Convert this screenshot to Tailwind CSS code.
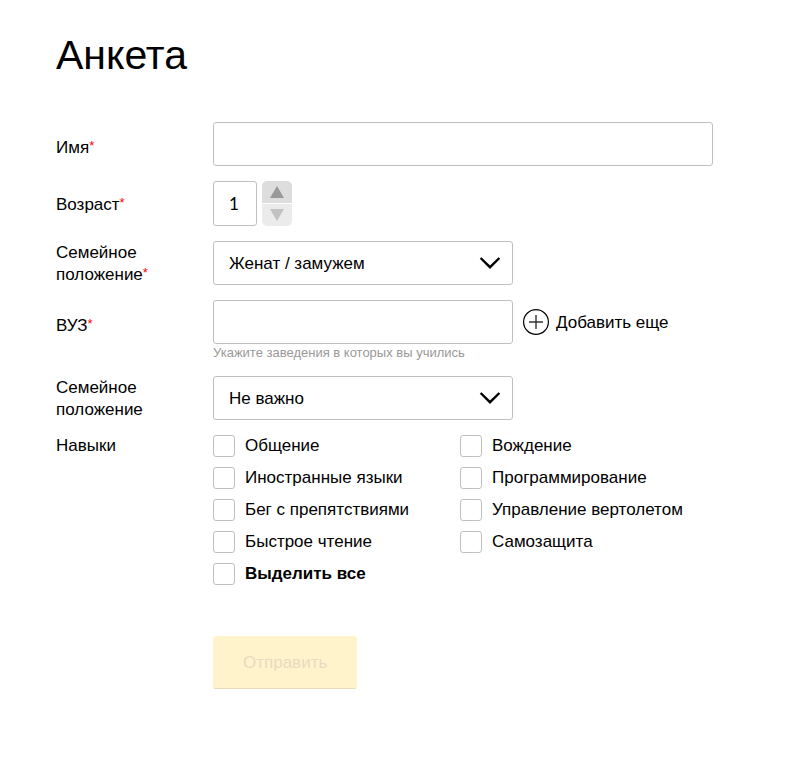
<!DOCTYPE html>
<html lang="ru">
<head>
<meta charset="utf-8">
<meta name="viewport" content="width=device-width, initial-scale=1">
<title>Анкета</title>
<script src="https://cdn.jsdelivr.net/npm/@tailwindcss/browser@4"></script>
</head>
<body class="bg-white font-['Liberation_Sans',Arial,sans-serif] text-[17px] leading-[22px] text-black">
<main class="max-w-[769px] px-14 pt-[31px] pb-[72px]">
  <h1 class="text-[41px] leading-[48px]">Анкета</h1>
  <form class="mt-[43px] flex flex-col gap-[15px]">
    <div class="flex items-start">
      <label for="name" class="w-[157px] shrink-0 pt-[15px]">Имя<span class="align-top text-[13px] leading-[18px] text-[#f00]">*</span></label>
      <input id="name" type="text" class="h-11 min-w-0 flex-1 rounded-[3px] border border-[#c0c0c0] px-[15px]">
    </div>
    <div class="flex items-start">
      <label for="age" class="w-[157px] shrink-0 pt-[13px]">Возраст<span class="align-top text-[13px] leading-[18px] text-[#f00]">*</span></label>
      <input id="age" type="text" inputmode="numeric" value="1" class="h-[45px] w-11 rounded-[3px] border border-[#c0c0c0] px-[15px] font-[Lato,sans-serif]">
      <div class="ml-[5px] flex w-[30px] flex-col gap-px overflow-hidden rounded-[5px]">
        <button type="button" aria-label="Больше" class="flex h-[22px] items-center justify-center bg-[#ddd]">
          <svg class="h-3 w-3.5" viewBox="0 0 14 12"><path d="M7 0L14 12H0Z" fill="#999"/></svg>
        </button>
        <button type="button" aria-label="Меньше" class="flex h-[22px] items-center justify-center bg-[#ebebeb]">
          <svg class="h-3 w-3.5" viewBox="0 0 14 12"><path d="M0 0H14L7 12Z" fill="#c2c2c2"/></svg>
        </button>
      </div>
    </div>
    <div class="flex items-start">
      <label for="status" class="-mb-px w-[157px] shrink-0 pt-px pr-10">Семейное положение<span class="align-top text-[13px] leading-[18px] text-[#f00]">*</span></label>
      <div class="relative w-[300px]">
        <select id="status" class="h-11 w-full appearance-none rounded-[3px] border border-[#c0c0c0] bg-white px-[15px] pt-px"><option>Женат / замужем</option><option>Не женат / не замужем</option></select>
        <svg class="pointer-events-none absolute top-4 right-3 h-3 w-[22px]" viewBox="0 0 22 12" fill="none" stroke="#000" stroke-width="2.4"><path d="M1.6 1L11 10.2L20.4 1"/></svg>
      </div>
    </div>
    <div class="flex items-start">
      <label for="school" class="w-[157px] shrink-0 pt-[15px]">ВУЗ<span class="align-top text-[13px] leading-[18px] text-[#f00]">*</span></label>
      <div class="w-[300px]">
        <input id="school" type="text" aria-describedby="school-hint" class="block h-11 w-full rounded-[3px] border border-[#c0c0c0] px-[15px]">
        <p id="school-hint" class="text-[13px] leading-[17px] text-[#999]">Укажите заведения в которых вы учились</p>
      </div>
      <button type="button" class="ml-2.5 flex h-11 items-center gap-[7px]">
        <svg class="size-[26px]" viewBox="0 0 26 26" fill="none" stroke="#000"><circle cx="13" cy="13" r="12.4" stroke-width="1.2"/><path d="M6 13H20M13 6V20" stroke="#333" stroke-width="1.4"/></svg>
        <span class="pt-px">Добавить еще</span>
      </button>
    </div>
    <div class="flex items-start">
      <label for="partner" class="-mb-px w-[157px] shrink-0 pt-px pr-10">Семейное положение</label>
      <div class="relative w-[300px]">
        <select id="partner" class="h-11 w-full appearance-none rounded-[3px] border border-[#c0c0c0] bg-white px-[15px] pt-px"><option>Не важно</option><option>Женат / замужем</option></select>
        <svg class="pointer-events-none absolute top-4 right-3 h-3 w-[22px]" viewBox="0 0 22 12" fill="none" stroke="#000" stroke-width="2.4"><path d="M1.6 1L11 10.2L20.4 1"/></svg>
      </div>
    </div>
    <fieldset class="-mt-px flex items-start leading-6" aria-labelledby="skills">
      <span id="skills" class="w-[157px] shrink-0">Навыки</span>
      <div class="grid flex-1 grid-cols-[247px_1fr] gap-y-2">
        <label class="flex items-center gap-2.5"><input type="checkbox" class="size-[22px] appearance-none rounded-[3px] border border-[#c0c0c0] checked:bg-[#ffdb4d]">Общение</label>
        <label class="flex items-center gap-2.5"><input type="checkbox" class="size-[22px] appearance-none rounded-[3px] border border-[#c0c0c0] checked:bg-[#ffdb4d]">Вождение</label>
        <label class="flex items-center gap-2.5"><input type="checkbox" class="size-[22px] appearance-none rounded-[3px] border border-[#c0c0c0] checked:bg-[#ffdb4d]">Иностранные языки</label>
        <label class="flex items-center gap-2.5"><input type="checkbox" class="size-[22px] appearance-none rounded-[3px] border border-[#c0c0c0] checked:bg-[#ffdb4d]">Программирование</label>
        <label class="flex items-center gap-2.5"><input type="checkbox" class="size-[22px] appearance-none rounded-[3px] border border-[#c0c0c0] checked:bg-[#ffdb4d]">Бег с препятствиями</label>
        <label class="flex items-center gap-2.5"><input type="checkbox" class="size-[22px] appearance-none rounded-[3px] border border-[#c0c0c0] checked:bg-[#ffdb4d]">Управление вертолетом</label>
        <label class="flex items-center gap-2.5"><input type="checkbox" class="size-[22px] appearance-none rounded-[3px] border border-[#c0c0c0] checked:bg-[#ffdb4d]">Быстрое чтение</label>
        <label class="flex items-center gap-2.5"><input type="checkbox" class="size-[22px] appearance-none rounded-[3px] border border-[#c0c0c0] checked:bg-[#ffdb4d]">Самозащита</label>
        <label class="flex items-center gap-2.5 font-bold"><input type="checkbox" class="size-[22px] appearance-none rounded-[3px] border border-[#c0c0c0] checked:bg-[#ffdb4d]">Выделить все</label>
      </div>
    </fieldset>
    <button type="submit" disabled class="mt-[35px] ml-[157px] h-[53px] self-start rounded-[3px] border-b border-[#e6dbb5] bg-[#fff3cc] px-[30px] pt-px text-[#e6dcc0]">Отправить</button>
  </form>
</main>
</body>
</html>
